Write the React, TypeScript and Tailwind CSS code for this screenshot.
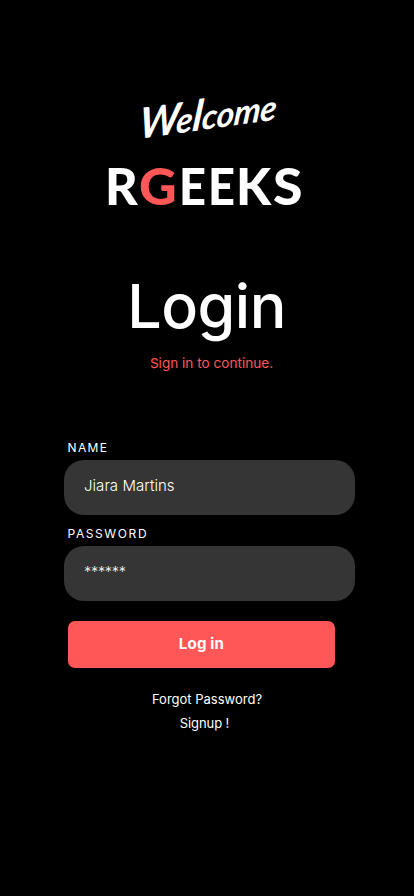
import React from "react";

const letters = [
  { char: "R", box: "w-[34px]" },
  { char: "G", box: "w-[40px] origin-left scale-x-[1.03] text-[#ff5757]" },
  { char: "E", box: "w-[29px] origin-left scale-x-[0.93]" },
  { char: "E", box: "w-[28px] origin-left scale-x-[0.93]" },
  { char: "K", box: "w-[37px]" },
  { char: "S", box: "w-[28px] origin-left scale-x-[1.06]" },
];

function Field({ label, value, type, spacing }: { label: string; value: string; type: string; spacing: string }) {
  return (
    <label className="block h-[85.5px]">
      <span className={`ml-[3.5px] block h-[20px] text-[12px] ${spacing}`}>{label}</span>
      <span className="flex h-[55px] w-[291px] items-center rounded-[20px] bg-[#353535] pl-[20px] pb-[3px]">
        <span className={type}>{value}</span>
      </span>
    </label>
  );
}

export default function App() {
  return (
    <main className="flex h-[896px] w-[414px] flex-col overflow-hidden bg-black font-['Inter','Liberation_Sans',sans-serif] text-white">
      <header className="flex h-[270px] flex-col pt-[90px]">
        <div className="ml-[141px] flex h-[54px] w-[134px] origin-center -rotate-[8deg] -skew-x-[14deg] items-baseline justify-center whitespace-nowrap font-['Lato',cursive] text-[34px] font-bold italic leading-[46px] tracking-[-0.3px]">
          <span className="text-[42px] leading-[46px] tracking-[-3px]">W</span>
          <span>e</span>
          <span className="text-[42px] leading-[46px]">l</span>
          <span>come</span>
        </div>
        <h1 className="ml-[105px] mt-[12px] flex h-[60px] font-['Lato',sans-serif] text-[50.5px] font-black leading-[60px]">
          {letters.map((l, i) => (
            <span key={i} className={l.box}>{l.char}</span>
          ))}
        </h1>
      </header>
      <section className="flex h-[169px] flex-col items-center">
        <h2 className="-ml-[1px] h-[80px] whitespace-nowrap text-[61px] font-medium leading-[73px] tracking-[-0.5px]">Login</h2>
        <p className="ml-[9px] mt-[3px] text-[13.6px] leading-[20px] text-[#ff5757]">Sign in to continue.</p>
      </section>
      <form className="ml-[64px] flex w-[291px] flex-col pt-[1px]">
        <Field label="NAME" value="Jiara Martins" type="text-[15px] font-light tracking-[0.05px]" spacing="leading-[16px] tracking-[1.4px]" />
        <Field label="PASSWORD" value="******" type="pt-[1px] text-[14.5px] font-light tracking-[-0.3px]" spacing="leading-[15px] tracking-[1.6px]" />
        <button type="button" className="ml-[4px] mt-[10px] h-[46.5px] w-[267px] rounded-[7px] bg-[#ff5757] text-[15px] font-bold tracking-[0.2px]">
          Log in
        </button>
      </form>
      <nav className="mt-[19.5px] flex flex-col items-center text-[13px] leading-[24px]">
        <a>Forgot Password?</a>
        <a className="-ml-[5px] tracking-[-0.1px]">Signup !</a>
      </nav>
    </main>
  );
}
